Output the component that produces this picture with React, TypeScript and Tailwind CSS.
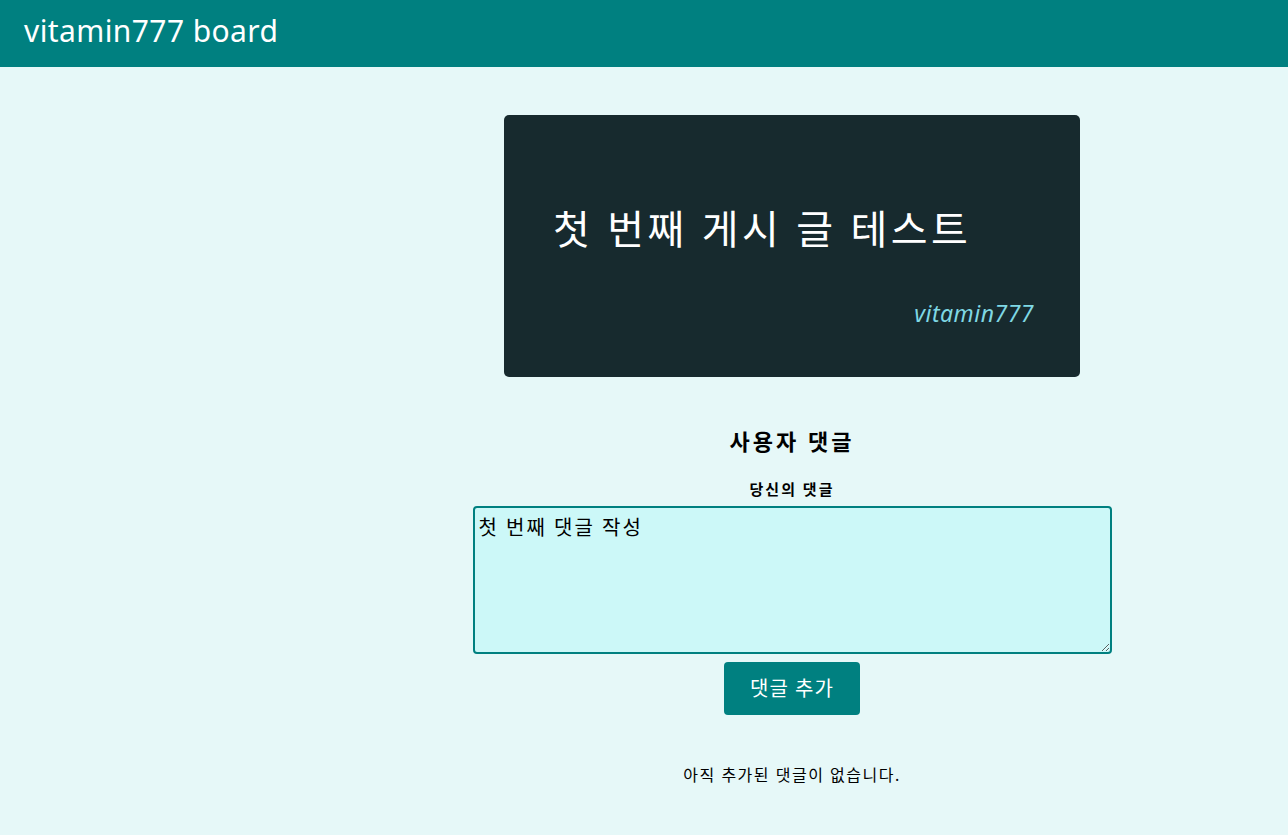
import React from "react";

export default function App() {
  const font = { fontFamily: '"Noto Sans", "Noto Sans CJK KR", sans-serif' };
  return (
    <div className="min-h-[835px] bg-[#e6f8f8] text-black" style={font}>
      <header className="h-[67px] bg-[#008080] flex items-center px-6">
        <h1 className="text-[30px] text-white font-normal leading-none -mt-[6px] tracking-[0.4px]">vitamin777 board</h1>
      </header>
      <main className="pl-[296px] flex flex-col items-center">
        <section className="mt-[48px] w-[576px] h-[262px] bg-[#172a2e] rounded-[5px] px-[49px] pt-[88px] flex flex-col">
          <h2 className="text-[40px] text-white font-normal leading-[52px] tracking-[3.5px]">첫 번째 게시 글 테스트</h2>
          <p className="mt-[44px] self-end mr-[-3px] text-[23px] italic text-[#7fd8e4] leading-[28px] tracking-[0.5px]">vitamin777</p>
        </section>
        <section className="mt-[48px] w-[639px] flex flex-col items-center">
          <h3 className="text-[22px] font-bold leading-[32px] tracking-[3px]">사용자 댓글</h3>
          <label className="mt-[21px] text-[15px] font-bold leading-[22px] tracking-[2px]">당신의 댓글</label>
          <textarea
            className="mt-[6px] w-[639px] h-[148px] bg-[#ccf8f8] border-2 border-[#008080] rounded-[4px] px-[4px] pt-[6px] text-[20px] leading-[28px] tracking-[2px] outline-none"
            style={font}
            defaultValue="첫 번째 댓글 작성"
          />
          <button className="mt-[8px] w-[136px] h-[53px] bg-[#008080] text-white rounded-[4px] text-[20px] tracking-[1px]" style={font}>
            댓글 추가
          </button>
          <p className="mt-[48px] text-[16px] leading-[24px] tracking-[1.5px]">아직 추가된 댓글이 없습니다.</p>
        </section>
      </main>
    </div>
  );
}
